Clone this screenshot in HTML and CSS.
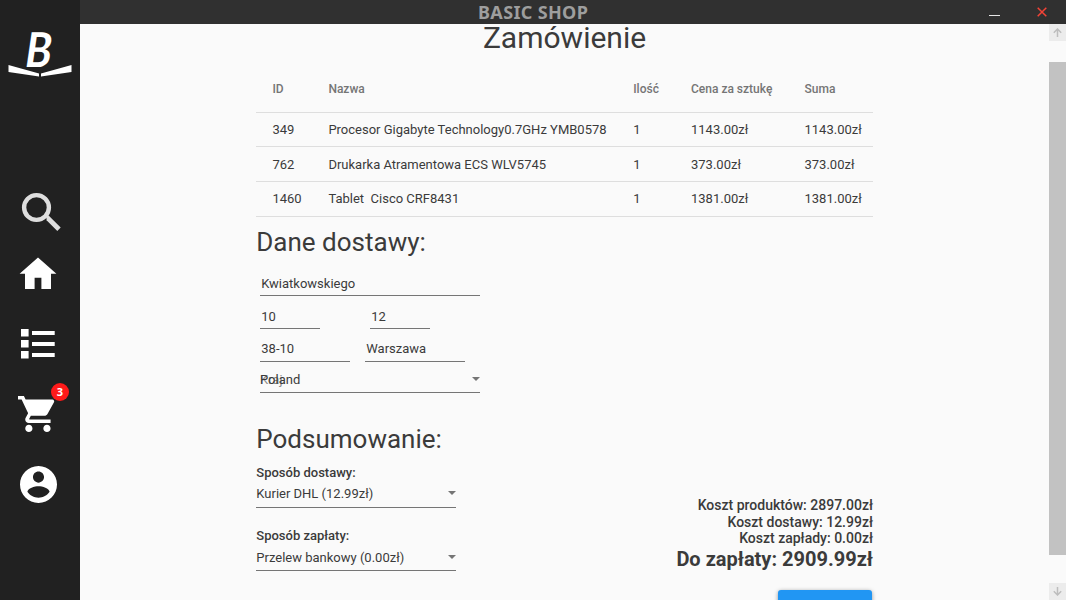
FILE: index.html
```html
<!DOCTYPE html>
<html lang="pl">
<head>
<meta charset="utf-8">
<title>BASIC SHOP</title>
<link rel="stylesheet" href="styles.css">
</head>
<body>
<div class="app">
  <nav class="sidebar">
    <svg class="logo" viewBox="0 0 64 46" fill="#fff">
      <text class="logo-letter" transform="translate(17 36) skewX(-2) scale(.9 1)">B</text>
      <path d="M.5 34v7L31 45.500v-3zM63.500 34v7L33 45.500v-3z"/>
    </svg>
    <svg class="icon search" viewBox="0 0 40 40" fill="none" stroke="#dedede"><circle cx="15.500" cy="15.500" r="12.400" stroke-width="4.400"/><path d="M25.500 26.500l1.500-.2L38 37.200" stroke-width="4.800"/></svg>
    <svg class="icon home" viewBox="0 0 44 44" fill="#fff"><path d="M18.600 37V25.700h6.800V37H35V21.800h5.400L22 5.500 3.600 21.800H9V37z"/></svg>
    <svg class="icon list" viewBox="0 0 34 30" fill="#fff"><path d="M0 0h7.600v7.600H0zM0 11h7.600v7.600H0zM0 22h7.600v7.600H0zM11 2h22.700v4H11zM11 13h22.700v4H11zM11 24h22.700v4H11z"/></svg>
    <div class="cart">
      <svg class="cart-icon" viewBox="1 2 21 20" fill="#fff"><path d="M7 18c-1.100 0-1.990.9-1.990 2S5.900 22 7 22s2-.9 2-2-.9-2-2-2zM1 2v2h2l3.600 7.590-1.350 2.450c-.16.280-.25.610-.25.960 0 1.100.9 2 2 2h12v-2H7.420c-.14 0-.25-.11-.25-.25l.03-.12.900-1.630h7.450c.75 0 1.410-.41 1.750-1.030l3.580-6.490A1 1 0 0 0 20 4H5.210l-.94-2H1zm16 16c-1.100 0-1.990.9-1.990 2s.89 2 1.990 2 2-.9 2-2-.9-2-2-2z"/></svg>
      <span class="badge">3</span>
    </div>
    <svg class="icon user" viewBox="2 2 20 20" fill="#fff"><path d="M12 2C6.480 2 2 6.480 2 12s4.480 10 10 10 10-4.480 10-10S17.520 2 12 2zm0 3c1.660 0 3 1.340 3 3s-1.340 3-3 3-3-1.340-3-3 1.340-3 3-3zm0 14.200c-2.500 0-4.710-1.280-6-3.220.03-1.990 4-3.080 6-3.080 1.990 0 5.970 1.090 6 3.080-1.290 1.940-3.500 3.220-6 3.220z"/></svg>
  </nav>
  <div class="window">
    <header class="titlebar">
      <span class="title">BASIC SHOP</span>
      <div class="controls">
        <span class="minimize"></span>
        <svg class="close" viewBox="0 0 10 10" stroke="#f44336" stroke-width="1.500"><path d="M.7.700l8.600 8.600M9.300.700L.7 9.300"/></svg>
      </div>
    </header>
    <div class="viewport">
      <main class="page">
        <h1 class="page-title">Zamówienie</h1>
        <div class="table">
          <div class="row head"><span>ID</span><span>Nazwa</span><span>Ilość</span><span>Cena za sztukę</span><span>Suma</span></div>
          <div class="row first"><span>349</span><span>Procesor Gigabyte Technology0.7GHz YMB0578</span><span>1</span><span>1143.00zł</span><span>1143.00zł</span></div>
          <div class="row second"><span>762</span><span>Drukarka Atramentowa ECS WLV5745</span><span>1</span><span>373.00zł</span><span>373.00zł</span></div>
          <div class="row"><span>1460</span><span>Tablet&nbsp; Cisco CRF8431</span><span>1</span><span>1381.00zł</span><span>1381.00zł</span></div>
        </div>
        <h2 class="section-title">Dane dostawy:</h2>
        <div class="form">
          <div class="field street">Kwiatkowskiego</div>
          <div class="line"><div class="field number">10</div><div class="field number">12</div></div>
          <div class="line zip-line"><div class="field zip">38-10</div><div class="field city">Warszawa</div></div>
          <div class="select country"><span class="stack"><span class="hint">Kraj</span><span>Poland</span></span><i class="arrow"></i></div>
        </div>
        <h2 class="section-title summary-title">Podsumowanie:</h2>
        <div class="summary">
          <div class="options">
            <b class="label">Sposób dostawy:</b>
            <div class="select delivery"><span>Kurier DHL (12.99zł)</span><i class="arrow"></i></div>
            <b class="label">Sposób zapłaty:</b>
            <div class="select payment"><span>Przelew bankowy (0.00zł)</span><i class="arrow"></i></div>
          </div>
          <div class="costs">
            <span class="products">Koszt produktów: 2897.00zł</span>
            <span>Koszt dostawy: 12.99zł</span>
            <span>Koszt zapłady: 0.00zł</span>
            <strong class="total">Do zapłaty: 2909.99zł</strong>
            <div class="submit"></div>
          </div>
        </div>
      </main>
      <div class="scrollbar">
        <div class="scroll-button"><svg viewBox="0 0 9 9" class="scroll-arrow"><path d="M4.500 9V1M.8 4.700L4.500 1l3.700 3.700"/></svg></div>
        <div class="thumb"></div>
        <div class="scroll-button"><svg viewBox="0 0 9 9" class="scroll-arrow"><path d="M4.500 0v8M.8 4.300L4.500 8l3.700-3.700"/></svg></div>
      </div>
    </div>
  </div>
</div>
</body>
</html>
```
FILE: styles.css
```css
* { box-sizing: border-box; }
body { margin: 0; background: #fafafa; color: #3b3b3b; font: 13px/16px Roboto, sans-serif; }
.app { display: flex; height: 600px; overflow: hidden; }
.sidebar { width: 80px; flex: none; background: #212121; display: flex; flex-direction: column; }
.sidebar > * { flex: none; }
.logo { width: 64px; height: 46px; margin: 31px 0 0 8px; overflow: visible; }
.logo-letter { font: italic bold 48px Lato, sans-serif; }
.search { width: 40px; height: 40px; margin: 114.500px 0 0 21px; }
.home { width: 44px; height: 44px; margin: 20.500px 0 0 16px; }
.list { width: 34px; height: 30px; margin: 33px 0 0 21px; }
.cart { position: relative; width: 38px; height: 38px; margin: 36px 0 0 18px; }
.cart-icon { display: block; width: 38px; height: 38px; }
.badge { position: absolute; left: 33px; top: -12px; width: 18px; height: 18px; border-radius: 50%; background: #ff1a1a; color: #fff; font: bold 11px/18px "Open Sans", sans-serif; text-align: center; }
.user { width: 37px; height: 37px; margin: 32.500px 0 0 19.500px; }
.window { flex: 1; display: flex; flex-direction: column; min-width: 0; }
.titlebar { height: 24px; flex: none; background: #303030; display: grid; grid-template-columns: 398px 1fr auto; }
.title { grid-column: 2; color: #9e9e9e; font: 700 18px/24px "Noto Sans", sans-serif; letter-spacing: .35px; white-space: nowrap; }
.controls { display: flex; padding-right: 19px; }
.minimize { width: 11px; height: 1px; margin: 15px 37px 0 0; background: #e6e6e6; }
.close { width: 10px; height: 10px; margin-top: 7px; }
.viewport { flex: 1; display: flex; min-height: 0; justify-content: space-between; overflow: hidden; }
.page { width: 617px; margin-left: 176px; }
.page-title { margin: 0; height: 48px; font-weight: 400; font-size: 30px; line-height: 28px; text-align: center; }
.table { display: grid; }
.row { display: grid; grid-template-columns: 56px 304.800px 57.800px 113.500px 1fr; padding-left: 16.400px; height: 35px; line-height: 34px; border-bottom: 1px solid #dedede; white-space: nowrap; }
.first { height: 34px; }
.second { line-height: 36px; }
.head { height: 41px; line-height: 35px; font-size: 12px; font-weight: 500; color: #757575; }
.section-title { margin: 8px 0 0; height: 35px; font-size: 26px; line-height: 35px; font-weight: 400; padding-left: .3px; }
.form { margin: 14px 0 0 4px; width: 220px; }
.field { height: 23px; padding: 0 1.300px; border-bottom: 1px solid #757575; line-height: 20px; }
.street { height: 22px; }
.line { display: flex; gap: 50px; margin-top: 10px; }
.number { width: 60px; line-height: 22px; }
.zip-line { gap: 15px; }
.zip { width: 90px; }
.city { width: 100px; }
.select { display: flex; justify-content: space-between; height: 24px; border-bottom: 1px solid #757575; line-height: 20px; }
.country { height: 25px; margin-top: 6px; line-height: 24px; }
.stack { display: grid; }
.stack > span { grid-area: 1 / 1; }
.hint { color: #8c8c8c; }
.arrow { border: 4px solid transparent; border-top: 4px solid #757575; border-bottom: 0; height: 4px; margin-top: 8px; }
.country .arrow { margin-top: 9px; }
.summary-title { margin-top: 29px; }
.summary { display: flex; justify-content: space-between; }
.options { width: 200px; margin-top: 8px; }
.label { display: block; font-weight: 500; height: 16px; padding-left: .3px; }
.delivery { height: 27px; line-height: 25px; margin-bottom: 20px; padding-left: .3px; }
.payment { height: 27px; line-height: 27px; padding-left: .3px; }
.delivery .arrow { margin-top: 10px; }
.payment .arrow { margin-top: 11px; }
.costs { display: flex; flex-direction: column; align-items: flex-end; margin-top: 40px; font-size: 14px; font-weight: 500; line-height: 16px; }
.products { line-height: 17px; }
.total { font-size: 20px; line-height: 26px; font-weight: 700; }
.submit { width: 94px; height: 36px; margin: 18px 1px 0 0; background: #2196f3; border-radius: 3px; box-shadow: 0 1px 4px #0006; }
.scrollbar { width: 17px; display: flex; flex-direction: column; justify-content: space-between; }
.scroll-button { height: 17px; background: #ececec; display: flex; align-items: center; justify-content: center; }
.scroll-arrow { width: 9px; height: 9px; fill: none; stroke: #bdbdbd; stroke-width: 1.500; }
.thumb { height: 493px; margin-bottom: 7px; background: #c2c2c2; }
```
